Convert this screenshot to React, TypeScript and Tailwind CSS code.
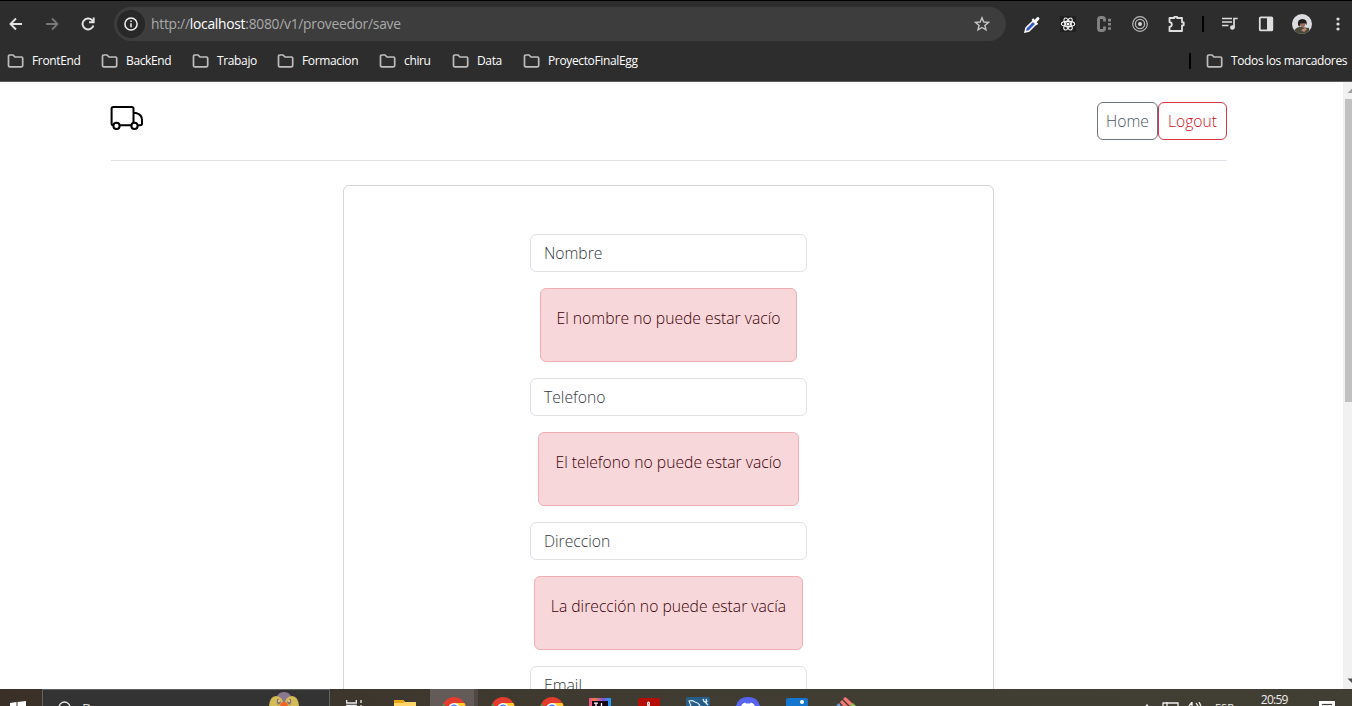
import type { ReactNode } from 'react';

const folders = [
  { name: 'FrontEnd', w: 'w-[72px]' },
  { name: 'BackEnd', w: 'w-[69px]' },
  { name: 'Trabajo', w: 'w-[63px]' },
  { name: 'Formacion', w: 'w-[80px]' },
  { name: 'chiru', w: 'w-[51px]' },
  { name: 'Data', w: 'w-[49px]' },
  { name: 'ProyectoFinalEgg', w: 'w-[116px]' },
];

function Folder({ name, w }: { name: string; w: string }) {
  return (
    <div className={`flex shrink-0 items-center gap-2 whitespace-nowrap ${w}`}>
      <svg className="-ml-px h-[14px] w-[17px] shrink-0" viewBox="0 0 17 14" fill="none" stroke="#bdbdbd" strokeWidth="1.7">
        <path d="M1.5 2.2Q1.5 1 2.7 1H6.1L7.9 3H14.5Q15.7 3 15.7 4.2V11.6Q15.7 12.8 14.5 12.8H2.7Q1.5 12.8 1.5 11.6Z" />
      </svg>
      <span>{name}</span>
    </div>
  );
}

function Slot({ children, w }: { children: ReactNode; w: string }) {
  return <div className={`flex shrink-0 items-center justify-center ${w}`}>{children}</div>;
}

function BrowserBar() {
  return (
    <header className="h-[82px] shrink-0 border-t border-b border-t-black border-b-[#5c5c5c] bg-[#2d2d2d]">
      <div className="flex h-[46px] items-center">
        <Slot w="w-8">
          <svg width="14" height="14" viewBox="0 0 14 14" fill="none" stroke="#e4e4e4" strokeWidth="1.9"><path d="M13 7H2M7 1.5 1.5 7 7 12.5" /></svg>
        </Slot>
        <Slot w="w-10">
          <svg width="14" height="14" viewBox="0 0 14 14" fill="none" stroke="#777" strokeWidth="1.8"><path d="M1 7H12M7 1.5 12.5 7 7 12.5" /></svg>
        </Slot>
        <Slot w="w-[32px]">
          <svg width="14" height="14" viewBox="0 0 14 14" fill="none" stroke="#e4e4e4" strokeWidth="1.9"><path d="M12.4 8.4A5.5 5.5 0 1 1 11.1 3.2L12.7 4.8M12.7.5V5.2H8" /></svg>
        </Slot>
        <div className="ml-[10px] flex h-[34px] w-[892px] shrink-0 items-center rounded-full bg-[#3d3d3d] pr-4 pl-[3px]">
          <div className="flex h-7 w-7 items-center justify-center rounded-full bg-[#282828]">
            <svg width="14" height="14" viewBox="0 0 14 14" fill="none" stroke="#f1f1f1" strokeWidth="1.5"><circle cx="7" cy="7" r="6.1" /><path d="M7 6.2V10.3M7 3.5V5" /></svg>
          </div>
          <span className="ml-[6px] text-[13.8px] tracking-[-0.25px] whitespace-nowrap text-[#a9a9a9]">http://<span className="text-white">localhost</span>:8080/v1/proveedor/save</span>
          <svg className="ml-auto" width="16" height="16" viewBox="0 0 16 16" fill="none" stroke="#c5c5c5" strokeWidth="1.4"><path d="M8 1.8 9.8 6 14.4 6.4 10.9 9.4 12 13.9 8 11.5 4 13.9 5.1 9.4 1.6 6.4 6.2 6Z" /></svg>
        </div>
        <div className="ml-2 flex items-center">
          <Slot w="w-9">
            <svg width="16" height="17" viewBox="0 0 16 17"><path d="M9 5 2 12 1 16 5 15 12 8Z" fill="#3557cc" stroke="#fff" strokeWidth="1.5" /><path d="m7.6 3.7 1.5-1.5 1.6 1.6L12.8 1.5Q14 .5 15 1.5T15 3.8L12.6 6.2 14.2 7.8 12.7 9.3Z" fill="#fff" /></svg>
          </Slot>
          <Slot w="w-9">
            <svg width="16" height="16" viewBox="0 0 16 16" fill="none" stroke="#f4f4f4" strokeWidth="1.1"><rect width="16" height="16" fill="#202020" stroke="none" /><ellipse cx="8" cy="8" rx="6.7" ry="2.6" /><ellipse cx="8" cy="8" rx="6.7" ry="2.6" transform="rotate(60 8 8)" /><ellipse cx="8" cy="8" rx="6.7" ry="2.6" transform="rotate(120 8 8)" /><circle cx="8" cy="8" r="1" fill="#fff" /></svg>
          </Slot>
          <Slot w="w-9">
            <svg width="16" height="16" viewBox="0 0 16 16" fill="none" stroke="#858585"><path d="M8.5 5.5V3.5Q8.5 1.5 6.5 1.5H4.5Q2.5 1.5 2.5 3.5V12.5Q2.5 14.5 4.5 14.5H6.5Q8.5 14.5 8.5 12.5V10.5" strokeWidth="2.8" /><path d="M13.5 2.8V13.8" strokeWidth="3" strokeDasharray="2.6 1.6" /></svg>
          </Slot>
          <Slot w="w-9">
            <svg width="16" height="16" viewBox="0 0 16 16" fill="none" stroke="#b6b6b6"><circle cx="8" cy="8" r="7.3" strokeWidth="1.2" /><circle cx="8" cy="8" r="4.6" strokeWidth="1.3" /><circle cx="8" cy="8" r="2" fill="#d5d5d5" stroke="none" /></svg>
          </Slot>
          <Slot w="w-9">
            <svg width="18" height="18" viewBox="0 0 18 18" fill="none" stroke="#e0e0e0" strokeWidth="1.8" strokeLinejoin="round"><path d="M2.5 3H7.3V1.8H10.1V3H15V7.3H16.7V10.3H15V16H2.5V12Q4.8 11.6 4.8 9.5T2.5 7Z" /></svg>
          </Slot>
          <Slot w="w-[18px]"><div className="h-4 w-[2px] bg-black" /></Slot>
          <Slot w="w-9">
            <svg width="16" height="14" viewBox="0 0 16 14" fill="none" stroke="#dedede" strokeWidth="1.7"><path d="M0 1.5H10M0 5H10M0 8.5H6.5M12 10.5V1.5H15.7" /><circle cx="10.4" cy="10.5" r="2.3" fill="#dedede" stroke="none" /></svg>
          </Slot>
          <Slot w="w-9">
            <svg width="16" height="16" viewBox="0 0 16 16"><rect x="1.8" y="1.4" width="12.5" height="13" rx="1" fill="none" stroke="#dedede" strokeWidth="1.8" /><path d="M9 1H14.5V15H9Z" fill="#dedede" /></svg>
          </Slot>
          <Slot w="w-9">
            <svg width="20" height="20" viewBox="0 0 20 20"><clipPath id="face"><circle cx="10" cy="10" r="10" /></clipPath><g clipPath="url(#face)"><path fill="#dcdce0" d="M0 0h20v20H0z" /><path fill="#4b4938" d="M1 20Q3 12 9 13L17 14 18 20Z" /><circle cx="10.6" cy="10.5" r="2.6" fill="#9c705f" /><path fill="#211f1e" d="M6 11Q5 5 10.5 5 15.5 5 14.7 11L13 9.2 8.4 9.5 7.4 13Z" /><path d="m9 16 4-2 2 1-3 3z" fill="#c08e78" /></g></svg>
          </Slot>
          <Slot w="w-9">
            <svg width="4" height="16" viewBox="0 0 4 16" fill="#dfdfdf"><circle cx="2" cy="3" r="1.6" /><circle cx="2" cy="8" r="1.6" /><circle cx="2" cy="13" r="1.6" /></svg>
          </Slot>
        </div>
      </div>
      <div className="flex h-[28px] items-center gap-[22px] pl-2 text-[12px] font-medium tracking-[-0.36px] text-white">
        {folders.map((f) => <Folder key={f.name} name={f.name} w={f.w} />)}
        <div className="ml-auto flex items-center gap-4">
          <div className="h-4 w-[2px] bg-black" />
          <Folder name="Todos los marcadores" w="w-[145px]" />
        </div>
      </div>
    </header>
  );
}

function Input({ label }: { label: string }) {
  return <div className="flex h-[38px] w-[277px] shrink-0 items-center rounded-md border border-[#dee2e6] px-[13px] text-[#34383d]">{label}</div>;
}

function Alert({ text, w }: { text: string; w: string }) {
  return <div className={`flex h-[74px] shrink-0 justify-center rounded-md border border-[#f1aeb5] bg-[#f8d7da] pt-4 whitespace-nowrap text-[#3a0007] ${w}`}>{text}</div>;
}

function Page() {
  return (
    <div className="flex h-[607px] shrink-0 overflow-hidden">
      <main className="w-[1343px] shrink-0 bg-white text-[15.7px] leading-[26px] font-light">
        <div className="ml-[111px] flex h-[79px] w-[1116px] items-start border-b border-[#dee2e6] pt-5">
          <svg className="-ml-px mt-[3px]" width="34" height="26" viewBox="0 0 34 26" fill="none" stroke="#000" strokeWidth="2">
            <path d="M3.2 20.2H3Q1.6 20.2 1.6 18.5V3.7Q1.6 2 3.3 2H21.8Q23.5 2 23.5 3.7V17.5M9.5 20.2H21M23.5 8H26Q32 9.5 32 15V18.5Q32 20.2 30.3 20.2H27.5" />
            <circle cx="6.5" cy="20.9" r="3.1" /><circle cx="24.5" cy="20.9" r="3.1" />
          </svg>
          <nav className="ml-auto flex">
            <span className="flex h-[38px] w-[61px] items-center justify-center rounded-md border border-[#6c757d] text-[#4c555d]">Home</span>
            <span className="flex h-[38px] w-[69px] items-center justify-center rounded-md border border-[#dc3545] text-[#cf1023]">Logout</span>
          </nav>
        </div>
        <form className="mt-6 ml-[343px] flex h-[640px] w-[651px] flex-col items-center gap-4 rounded-md border border-[#d2d4d7] pt-12">
          <Input label="Nombre" />
          <Alert text="El nombre no puede estar vacío" w="w-[257px]" />
          <Input label="Telefono" />
          <Alert text="El telefono no puede estar vacío" w="w-[261px]" />
          <Input label="Direccion" />
          <Alert text="La dirección no puede estar vacía" w="w-[269px]" />
          <Input label="Email" />
        </form>
      </main>
      <aside className="flex flex-1 flex-col justify-between overflow-hidden bg-[#f1f1f1] pl-[2px]">
        <svg className="h-[17px] w-[13px] shrink-0" viewBox="0 0 13 17"><path d="M2.5 11 7 6.5 11.5 11Z" fill="#a3a3a3" /></svg>
        <div className="h-[303px] bg-[#c1c1c1]" />
        <div className="flex-1" />
        <svg className="h-[17px] w-[13px] shrink-0" viewBox="0 0 13 17"><path d="M2.5 6.5 7 11 11.5 6.5Z" fill="#505050" /></svg>
      </aside>
    </div>
  );
}

function Chrome() {
  return (
    <svg width="24" height="9" viewBox="0 0 24 9">
      <clipPath id="disc"><circle cx="12" cy="12" r="12" /></clipPath>
      <g clipPath="url(#disc)"><path fill="#e33b2e" d="M0 0h24v9H0z" /><path d="M12 6h12v3H12z" fill="#fcc934" /><path d="M0 5.5 3.5 9H0z" fill="#2da94f" /><circle cx="12" cy="12" r="6" fill="#fff" /><circle cx="12" cy="12" r="4.6" fill="#4285f4" /></g>
    </svg>
  );
}

function Taskbar() {
  return (
    <footer className="flex h-[17px] shrink-0 items-end overflow-hidden bg-linear-to-r from-[#3a3027] via-[#403c32] to-[#413f33]">
      <div className="flex h-full w-[42px] shrink-0 items-end pl-[10px]">
        <svg width="16" height="5" viewBox="0 0 16 5"><path d="M0 2 6.5 1V5H0ZM7.5.9 16 0V5H7.5Z" fill="#fff" /></svg>
      </div>
      <div className="flex h-full w-[288px] shrink-0 items-start overflow-hidden border-x border-t border-[#606060] bg-[#333] pl-[15px]">
        <svg className="mt-[11px] shrink-0" width="14" height="14" viewBox="0 0 14 14" fill="none" stroke="#eee" strokeWidth="1.3"><circle cx="6.5" cy="6.5" r="5.5" /></svg>
        <span className="mt-[11px] ml-[10px] text-[14px] leading-[16px] text-[#ddd]">Buscar</span>
        <svg className="mt-[2px] mr-[29px] ml-auto shrink-0" width="32" height="14" viewBox="0 0 32 14">
          <path d="M8 8Q9 0 16 0T24 8V14H8Z" fill="#8b7790" /><path d="M1 14Q2 4 8 4 15 5 15 11L12 14Z" fill="#d3bb55" /><path d="M31 14Q30 4 24 4 17 5 17 11L20 14Z" fill="#d3bb55" /><path d="M9 7Q12 7 13 11L10 13Q8 10 9 7ZM23 7Q20 7 19 11L22 13Q24 10 23 7Z" fill="#857178" /><path d="m13 11 2-1h2l2 1 1 3H12Z" fill="#f16426" /><circle cx="11" cy="9" r="1" fill="#f0dc90" /><circle cx="21" cy="9" r="1" fill="#f0dc90" />
        </svg>
      </div>
      <div className="flex h-full w-[100px] shrink-0 items-end pl-4">
        <svg width="16" height="6" viewBox="0 0 16 6" fill="none" stroke="#eee" strokeWidth="1.3"><path d="M.7 0V3H10.3V0M.7 6V5.4H10.3V6M15 0V3M15 5V6" /></svg>
        <svg className="ml-8" width="22" height="6" viewBox="0 0 22 6"><path d="M0 0H9L11 2H22V6H0Z" fill="#ffd56a" /><path d="M0 0H9L11 2 9 3H0Z" fill="#e9a712" /></svg>
      </div>
      <div className="flex h-full w-[48px] shrink-0 items-end justify-center border-r-4 border-[#504943] bg-[#635b57] pl-[4px]"><Chrome /></div>
      <div className="flex h-full items-end pl-[13px]"><Chrome /></div>
      <div className="flex h-full items-end pl-[25px]"><Chrome /></div>
      <svg className="ml-[25px] shrink-0" width="22" height="8" viewBox="0 0 22 8">
        <defs><linearGradient id="ij"><stop stopColor="#ed4c92" /><stop offset=".25" stopColor="#f47b48" /><stop offset=".65" stopColor="#8054df" /><stop offset="1" stopColor="#15a8f5" /></linearGradient></defs>
        <path fill="url(#ij)" d="M0 0h22v8H0z" /><path fill="#170719" d="M3 3h16v5H3z" /><path d="M5 5.2H9M7 5V8M12.5 5V8" stroke="#fff" strokeWidth="1.3" />
      </svg>
      <svg className="ml-[27px] shrink-0" width="22" height="8" viewBox="0 0 22 8"><path d="M0 8V2Q0 0 2 0H20Q22 0 22 2V8Z" fill="#b60e05" /><path d="M10 8Q9 4 10.5 4T11 8" stroke="#fff" strokeWidth="1.2" fill="none" /></svg>
      <svg className="ml-[26px] shrink-0" width="24" height="9" viewBox="0 0 24 9"><path d="M0 9V2Q0 0 2 0H22Q24 0 24 2V9Z" fill="#285f8a" /><path d="M5 9 3 4Q6 3 9 5 13 6 14 9" fill="none" stroke="#e3edf3" strokeWidth="1.1" /><path d="M17 2 18 4.5 21 5M18.5 4.5 22 8M20 2 21 5" fill="none" stroke="#e3edf3" strokeWidth="1.3" /></svg>
      <svg className="ml-[26px] shrink-0" width="24" height="9" viewBox="0 0 24 9"><path d="M0 9Q2 0 12 0T24 9Z" fill="#5865f2" /><path d="M5 9Q6 6 9 5.5L10 6.5H14L15 5.5Q18 6 19 9Z" fill="#fff" /></svg>
      <svg className="ml-[26px] shrink-0" width="22" height="8" viewBox="0 0 22 8"><path d="M0 8V2Q0 0 2 0H20Q22 0 22 2V8Z" fill="#1476ce" /><circle cx="16" cy="4" r="2" fill="#fff" /></svg>
      <svg className="ml-[28px] shrink-0" width="20" height="9" viewBox="0 0 20 9"><path d="M7 2 9 0Q10 0 17 7L14 9Z" fill="#f77972" /><path d="M4 5 6 3 12 9H7Z" fill="#f77972" /><path d="M0 9 3 6 5 9Z" fill="#73a3df" /><path d="m14 9 3-3 3 3Z" fill="#85c85a" /></svg>
      <div className="ml-auto flex h-full w-[209px] shrink-0 items-start overflow-hidden text-[#eee]">
        <svg className="mt-[13px] shrink-0" width="66" height="4" viewBox="0 0 66 4" fill="none" stroke="#eee" strokeWidth="1.3"><path d="M3 4 4 3 5 4M20 4V1H35V4M24 0V4M46 4 49 0V4M53 1 55 4M56 0 58 4" /></svg>
        <span className="mt-[12px] ml-[6px] text-[11px] leading-[14px]">ESP</span>
        <span className="mt-[3px] ml-[27px] text-[12px] leading-4 tracking-[-0.75px]">20:59</span>
        <svg className="mt-[12px] ml-auto mr-[17px] shrink-0" width="16" height="5" viewBox="0 0 16 5"><path d="M0 0h16v5H0z" fill="#fff" /><path d="M3 3.5h10" stroke="#413f33" strokeWidth="1.2" /></svg>
      </div>
    </footer>
  );
}

export default function App() {
  return (
    <div className="flex h-[706px] w-[1352px] flex-col overflow-hidden bg-white font-['Open_Sans','Noto_Sans',sans-serif]">
      <BrowserBar />
      <Page />
      <Taskbar />
    </div>
  );
}
